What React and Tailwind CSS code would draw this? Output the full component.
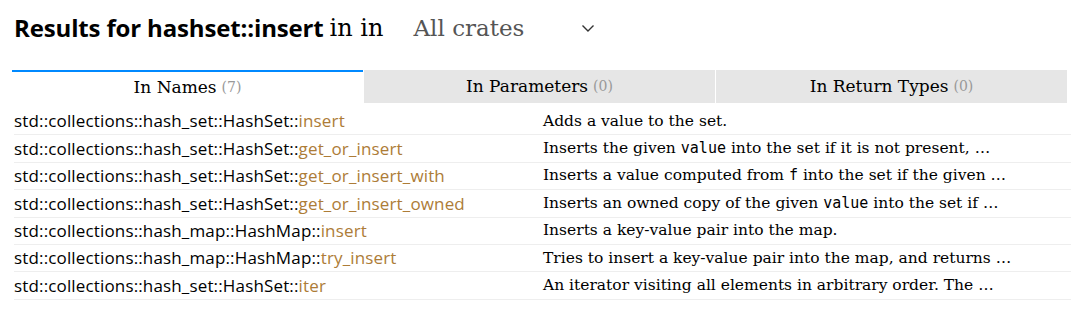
import React from "react";

const sans = { fontFamily: '"Open Sans", "Noto Sans", sans-serif' };

const rows = [
  { path: "std::collections::hash_set::HashSet::", name: "insert", desc: ["Adds a value to the set."] },
  { path: "std::collections::hash_set::HashSet::", name: "get_or_insert", desc: ["Inserts the given ", { code: "value" }, " into the set if it is not present, …"] },
  { path: "std::collections::hash_set::HashSet::", name: "get_or_insert_with", desc: ["Inserts a value computed from ", { code: "f" }, " into the set if the given …"] },
  { path: "std::collections::hash_set::HashSet::", name: "get_or_insert_owned", desc: ["Inserts an owned copy of the given ", { code: "value" }, " into the set if …"] },
  { path: "std::collections::hash_map::HashMap::", name: "insert", desc: ["Inserts a key-value pair into the map."] },
  { path: "std::collections::hash_map::HashMap::", name: "try_insert", desc: ["Tries to insert a key-value pair into the map, and returns …"] },
  { path: "std::collections::hash_set::HashSet::", name: "iter", desc: ["An iterator visiting all elements in arbitrary order. The …"] },
];

export default function App() {
  return (
    <div className="w-[1071px] h-[319px] bg-white overflow-hidden text-black">
      <div className="flex items-center pl-[14px] h-[56px]">
        <h1 className="text-[24px] font-bold leading-none tracking-[-0.15px] font-['Open_Sans',sans-serif]">
          Results for hashset::insert
        </h1>
        <span className="ml-[6px] text-[24px] leading-none font-['DejaVu_Serif',serif]">in in</span>
        <div className="ml-[30px] flex items-center w-[183px] justify-between text-[#555]">
          <span className="text-[23px] leading-none font-['DejaVu_Serif',serif]">All crates</span>
          <svg width="14" height="9" viewBox="0 0 14 9" className="mr-[2px]">
            <path d="M1.5 1.5 L7 7 L12.5 1.5" fill="none" stroke="#333" strokeWidth="1.4" />
          </svg>
        </div>
      </div>
      <div className="mt-[14px] ml-[12px] w-[1055px] flex gap-[1px] font-['DejaVu_Serif',serif] text-[17px]">
        {[
          ["In Names", "(7)", true],
          ["In Parameters", "(0)", false],
          ["In Return Types", "(0)", false],
        ].map(([label, count, active]) => (
          <div
            key={label}
            className={
              "flex-1 h-[33px] flex items-center justify-center " +
              (active ? "bg-white border-t-2 border-[#0089ff]" : "bg-[#e6e6e6]")
            }
          >
            <span>{label}</span>
            <span className="ml-[5px] text-[14px] text-[#999]">{count}</span>
          </div>
        ))}
      </div>
      <div className="mt-[5px] ml-[14px]">
        {rows.map((r, i) => (
          <div key={i} className="flex items-center h-[27.4px] border-b border-[#eeeeee]">
            <div className="w-[529px] text-[17px] tracking-[0.15px] whitespace-nowrap" style={sans}>
              {r.path}
              <span className="text-[#ad7c37]">{r.name}</span>
            </div>
            <div className="text-[15.5px] whitespace-nowrap font-['DejaVu_Serif',serif]">
              {r.desc.map((d, j) =>
                typeof d === "string" ? (
                  <span key={j}>{d}</span>
                ) : (
                  <code key={j} className="font-['DejaVu_Sans_Mono',monospace] text-[15px]">
                    {d.code}
                  </code>
                )
              )}
            </div>
          </div>
        ))}
      </div>
    </div>
  );
}
